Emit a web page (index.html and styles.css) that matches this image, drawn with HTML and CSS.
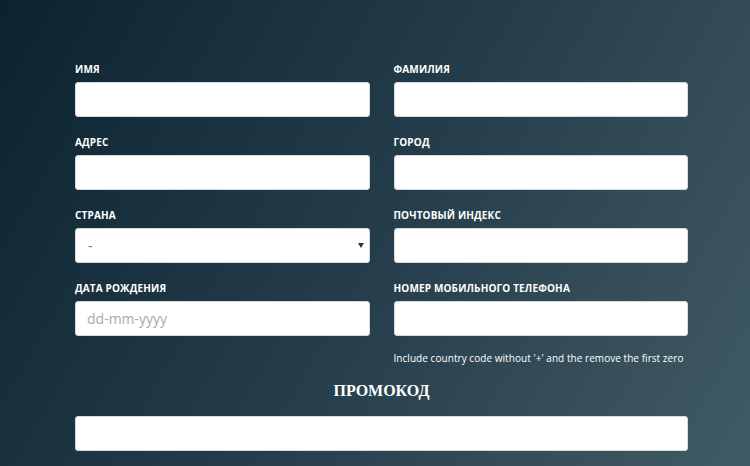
FILE: index.html
```html
<!DOCTYPE html>
<html lang="ru">
<head>
<meta charset="utf-8">
<link rel="stylesheet" href="styles.css">
</head>
<body>
<form class="form">
  <div class="grid">
    <div class="field"><label class="label">Имя</label><input class="input" type="text"></div>
    <div class="field"><label class="label">Фамилия</label><input class="input" type="text"></div>
    <div class="field"><label class="label">Адрес</label><input class="input" type="text"></div>
    <div class="field"><label class="label">Город</label><input class="input" type="text"></div>
    <div class="field"><label class="label">Страна</label>
      <div class="select"><span class="select-value">-</span><span class="select-arrow"></span></div>
    </div>
    <div class="field"><label class="label">Почтовый индекс</label><input class="input" type="text"></div>
    <div class="field"><label class="label">Дата рождения</label><input class="input" type="text" placeholder="dd-mm-yyyy"></div>
    <div class="field"><label class="label">Номер мобильного телефона</label><input class="input" type="text">
      <p class="hint">Include country code without '+' and the remove the first zero</p>
    </div>
  </div>
  <h3 class="promo-title">ПРОМОКОД</h3>
  <input class="input" type="text">
</form>
</body>
</html>
```
FILE: styles.css
```css
html, body {
  margin: 0;
  height: 100%;
}
body {
  background: linear-gradient(120deg, #0c2230 0%, #253d4b 50%, #415b64 100%);
  font-family: "Open Sans", "Liberation Sans", sans-serif;
  overflow: hidden;
}
.form {
  width: 613px;
  margin-left: 75px;
  padding-top: 63px;
}
.grid {
  display: grid;
  grid-template-columns: 1fr 1fr;
  column-gap: 24px;
  row-gap: 19px;
}
.field {
  display: flex;
  flex-direction: column;
}
.label {
  color: #fff;
  font-size: 10px;
  font-weight: 700;
  text-transform: uppercase;
  line-height: 13px;
  margin-bottom: 6px;
  letter-spacing: 0.15px;
}
.input, .select {
  box-sizing: border-box;
  width: 100%;
  height: 35px;
  border: 1px solid #d6d9dc;
  border-radius: 3px;
  background: #fff;
  padding: 0 11px;
  font-family: "Open Sans", sans-serif;
  font-size: 14px;
  color: #333;
  outline: none;
  display: block;
}
.input::placeholder {
  color: #a9a9a9;
}
.select {
  display: flex;
  align-items: center;
  justify-content: space-between;
  padding: 0 4px 0 12px;
}
.select-value {
  color: #777;
  font-size: 14px;
}
.select-arrow {
  width: 0;
  height: 0;
  border-left: 3px solid transparent;
  border-right: 3px solid transparent;
  border-top: 5px solid #333;
  margin-right: 1px;
}
.hint {
  margin: 15px 0 0;
  color: #fff;
  font-size: 10px;
  line-height: 14px;
  white-space: nowrap;
  letter-spacing: 0.05px;
}
.promo-title {
  margin: 16px 0 15px;
  text-align: center;
  color: #fff;
  font-family: "Liberation Serif", "Times New Roman", serif;
  font-size: 16px;
  font-weight: 700;
  line-height: 20px;
}
```
